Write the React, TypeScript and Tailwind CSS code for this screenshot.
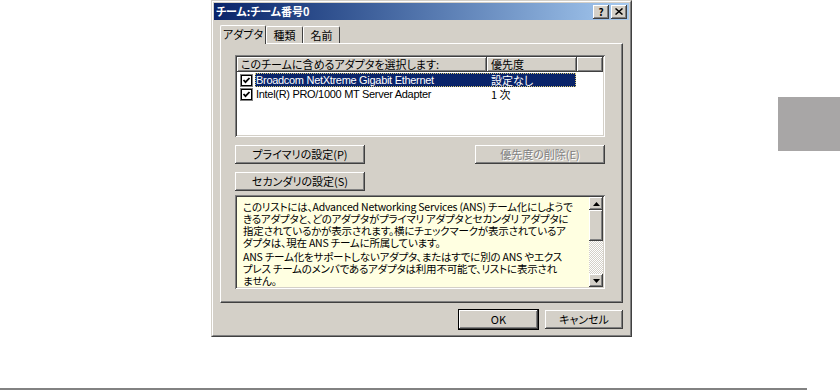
import React from "react";

const raised =
  "shadow-[inset_-1px_-1px_#404040,inset_1px_1px_#ffffff,inset_-2px_-2px_#808080,inset_2px_2px_#d4d0c8]";
const sunken =
  "shadow-[inset_1px_1px_#808080,inset_-1px_-1px_#ffffff,inset_2px_2px_#404040,inset_-2px_-2px_#d4d0c8]";
const jp = "font-['Noto_Sans_CJK_JP','Liberation_Sans',sans-serif] [font-feature-settings:'palt']";

function Check() {
  return (
    <svg width="13" height="13" viewBox="0 0 13 13" className="shrink-0">
      <rect x="0.5" y="0.5" width="12" height="12" fill="#fff" stroke="#808080" />
      <rect x="1.5" y="1.5" width="10" height="10" fill="#fff" stroke="#000" />
      <path d="M3.5 6 L5.5 8.2 L9.5 4" fill="none" stroke="#000" strokeWidth="1.8" />
    </svg>
  );
}

function Btn({ label, w, disabled, def }: { label: string; w: string; disabled?: boolean; def?: boolean }) {
  return (
    <div
      className={`${w} h-[19px] bg-[#d4d0c8] flex items-center justify-center text-[11px] ${raised} ${
        def ? "outline outline-1 outline-black" : ""
      } ${disabled ? "text-[#808080] [text-shadow:1px_1px_#ffffff]" : "text-black"}`}
    >
      {label}
    </div>
  );
}

export default function App() {
  return (
    <div className={`w-[840px] h-[391px] bg-white overflow-hidden flex flex-col ${jp}`}>
      <div className="flex">
        <div className="w-[211px] shrink-0" />

        {/* Dialog */}
        <div className="w-[421px] h-[337px] shrink-0 bg-[#d4d0c8] border border-t-[#d4d0c8] border-l-[#d4d0c8] border-r-[#404040] border-b-[#404040]">
          <div className="h-full border border-t-white border-l-white border-r-[#808080] border-b-[#808080] p-px flex flex-col">
            {/* Title bar */}
            <div className="h-[17px] flex items-center pl-[2px] pr-[2px] bg-gradient-to-r from-[#0a246a] to-[#a6caf0]">
              <span className="text-[11px] font-bold text-white leading-none">チーム:チーム番号0</span>
              <div className="ml-auto flex gap-[2px]">
                <div className={`w-[16px] h-[14px] bg-[#d4d0c8] ${raised} flex items-center justify-center text-[10px] font-bold leading-none text-black`}>?</div>
                <div className={`w-[16px] h-[14px] bg-[#d4d0c8] ${raised} flex items-center justify-center`}>
                  <svg width="8" height="7" viewBox="0 0 8 7">
                    <path d="M0.5 0.5 L7.5 6.5 M7.5 0.5 L0.5 6.5" stroke="#000" strokeWidth="1.5" />
                  </svg>
                </div>
              </div>
            </div>

            <div className="px-[6px] pt-[4px] flex flex-col">
              {/* Tabs */}
              <div className="flex items-end h-[19px] relative z-10">
                <div className="w-[46px] h-[19px] -mb-px bg-[#d4d0c8] border-t border-l border-white border-r border-r-[#404040] rounded-t-[2px] flex items-start justify-center pt-[1px] text-[11px] leading-[15px] text-black">
                  アダプタ
                </div>
                <div className="w-[37px] h-[17px] border-t border-l border-white border-r border-r-[#404040] rounded-t-[2px] flex items-start justify-center pt-[1px] text-[11px] leading-[14px] text-black">
                  種類
                </div>
                <div className="w-[37px] h-[17px] border-t border-l border-white border-r border-r-[#404040] rounded-t-[2px] flex items-start justify-center pt-[1px] text-[11px] leading-[14px] text-black">
                  名前
                </div>
              </div>

              {/* Tab panel */}
              <div className="h-[260px] border border-t-white border-l-white border-r-[#404040] border-b-[#404040]">
                <div className="h-full border-r border-b border-r-[#808080] border-b-[#808080] pl-[14px] pt-[11px] flex flex-col">
                  {/* List view */}
                  <div className={`w-[370px] h-[82px] bg-white p-[2px] ${sunken}`}>
                    <div className="flex h-[15px] text-[11px] text-black">
                      <div className={`w-[250px] bg-[#d4d0c8] ${raised} pl-[4px] leading-[15px] whitespace-nowrap`}>
                        このチームに含めるアダプタを選択します:
                      </div>
                      <div className={`w-[90px] bg-[#d4d0c8] ${raised} pl-[4px] leading-[15px]`}>優先度</div>
                      <div className={`flex-1 bg-[#d4d0c8] ${raised}`} />
                    </div>
                    <div className="flex items-center h-[14px] mt-px pl-[3px] text-[11px]">
                      <Check />
                      <div className="w-[321px] h-[14px] ml-[2px] bg-[#0a246a] text-white flex outline outline-1 outline-dotted outline-[#d8c870] -outline-offset-1">
                        <span className="w-[236px] pl-px leading-[14px] whitespace-nowrap font-['Liberation_Sans',sans-serif] tracking-[-0.3px]">Broadcom NetXtreme Gigabit Ethernet</span>
                        <span className="leading-[14px]">設定なし</span>
                      </div>
                    </div>
                    <div className="flex items-center h-[14px] pl-[3px] text-[11px] text-black">
                      <Check />
                      <div className="w-[321px] h-[14px] ml-[2px] flex">
                        <span className="w-[236px] pl-px leading-[14px] whitespace-nowrap font-['Liberation_Sans',sans-serif] tracking-[-0.3px]">Intel(R) PRO/1000 MT Server Adapter</span>
                        <span className="leading-[14px]">1 次</span>
                      </div>
                    </div>
                  </div>

                  {/* Buttons */}
                  <div className="flex justify-between w-[370px] mt-[8px]">
                    <Btn label="プライマリの設定(P)" w="w-[130px]" />
                    <Btn label="優先度の削除(E)" w="w-[130px]" disabled />
                  </div>
                  <div className="mt-[8px]">
                    <Btn label="セカンダリの設定(S)" w="w-[130px]" />
                  </div>

                  {/* Info box */}
                  <div className={`w-[370px] h-[94px] mt-[4px] bg-[#ffffe1] p-[2px] flex ${sunken}`}>
                    <div className="flex-1 pl-[6px] pt-[4px] text-[10.5px] leading-[12px] tracking-[-0.2px] text-black whitespace-nowrap overflow-hidden">
                      <div>このリストには、Advanced Networking Services (ANS) チーム化にしようで</div>
                      <div>きるアダプタと、どのアダプタがプライマリ アダプタとセカンダリ アダプタに</div>
                      <div>指定されているかが表示されます。横にチェックマークが表示されているア</div>
                      <div>ダプタは、現在 ANS チームに所属しています。</div>
                      <div className="mt-[2px]">ANS チーム化をサポートしないアダプタ、またはすでに別の ANS やエクス</div>
                      <div>プレス チームのメンバであるアダプタは利用不可能で、リストに表示され</div>
                      <div>ません。</div>
                    </div>
                    <div className="w-[14px] flex flex-col">
                      <div className={`h-[13px] bg-[#d4d0c8] ${raised} flex items-center justify-center`}>
                        <svg width="7" height="4" viewBox="0 0 7 4"><path d="M3.5 0 L7 4 L0 4 Z" fill="#000" /></svg>
                      </div>
                      <div className={`h-[31px] bg-[#d4d0c8] ${raised}`} />
                      <div className="flex-1 bg-[repeating-conic-gradient(#d4d0c8_0_25%,#ffffff_0_50%)] bg-[length:2px_2px]" />
                      <div className={`h-[13px] bg-[#d4d0c8] ${raised} flex items-center justify-center`}>
                        <svg width="7" height="4" viewBox="0 0 7 4"><path d="M0 0 L7 0 L3.5 4 Z" fill="#000" /></svg>
                      </div>
                    </div>
                  </div>
                </div>
              </div>

              {/* OK / Cancel */}
              <div className="flex justify-end gap-[7px] mt-[7px]">
                <Btn label="OK" w="w-[79px]" def />
                <Btn label="キャンセル" w="w-[78px]" />
              </div>
            </div>
          </div>
        </div>

        <div className="ml-auto mt-[97px] w-[62px] h-[54px] bg-[#a8a6a6]" />
      </div>

      <div className="mt-[51px] w-[807px] h-[2px] bg-[#828282]" />
    </div>
  );
}
